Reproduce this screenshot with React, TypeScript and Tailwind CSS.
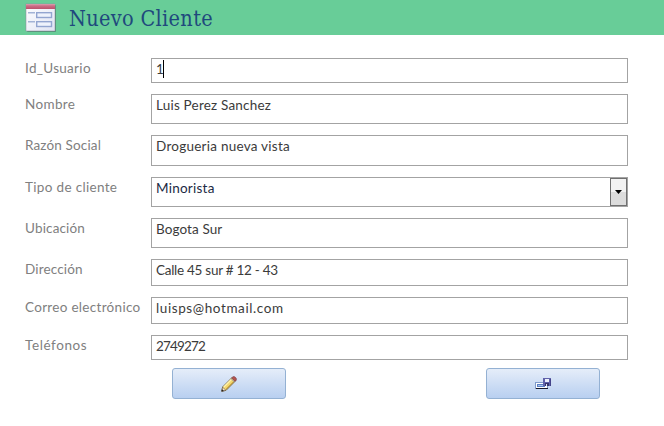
type Field = {
  label: string;
  value: string;
  height: string;
  labelTracking: string;
  valueTracking: string;
  kind?: "caret" | "select";
};

const fields: Field[] = [
  { label: "Id_Usuario", value: "1", height: "h-[25px]", labelTracking: "tracking-[0.3px]", valueTracking: "tracking-[-0.7px]", kind: "caret" },
  { label: "Nombre", value: "Luis Perez Sanchez", height: "h-[30px]", labelTracking: "tracking-[0.35px]", valueTracking: "tracking-[0.2px]" },
  { label: "Razón Social", value: "Drogueria nueva vista", height: "h-[31px]", labelTracking: "tracking-[0.15px]", valueTracking: "tracking-[0.25px]" },
  { label: "Tipo de cliente", value: "Minorista", height: "h-[30px]", labelTracking: "tracking-[0.33px]", valueTracking: "tracking-[0.25px]", kind: "select" },
  { label: "Ubicación", value: "Bogota Sur", height: "h-[30px]", labelTracking: "tracking-[0.15px]", valueTracking: "tracking-[0.1px]" },
  { label: "Dirección", value: "Calle 45 sur # 12 - 43", height: "h-[27px]", labelTracking: "tracking-[0.15px]", valueTracking: "tracking-[-0.27px]" },
  { label: "Correo electrónico", value: "luisps@hotmail.com", height: "h-[27px]", labelTracking: "tracking-[0.3px]", valueTracking: "tracking-[0.6px]" },
  { label: "Teléfonos", value: "2749272", height: "h-[25px]", labelTracking: "tracking-[0.6px]", valueTracking: "tracking-[-0.85px]" },
];

function FormIcon() {
  return (
    <svg width="32" height="30" viewBox="0 0 32 30">
      <defs>
        <linearGradient id="sheet" x1="0" y1="0" x2="1" y2="1">
          <stop offset="0" stopColor="#ffffff" />
          <stop offset="1" stopColor="#dfe3f3" />
        </linearGradient>
        <linearGradient id="bar" x1="0" y1="0" x2="0" y2="1">
          <stop offset="0" stopColor="#d9a0b0" />
          <stop offset=".4" stopColor="#cc6c86" />
          <stop offset="1" stopColor="#bb526c" />
        </linearGradient>
      </defs>
      <rect x="2" y="2" width="29" height="27" rx="1" fill="#42775f" opacity=".65" />
      <rect x="1" y="1" width="29" height="27" fill="url(#sheet)" stroke="#8f829a" strokeWidth=".5" />
      <rect x="1" y="1" width="29" height="5" fill="url(#bar)" />
      <path d="M3 9.7h7M3 18.7h7" stroke="#a3b3d6" strokeWidth="1.4" />
      <rect x="11.7" y="9.7" width="14.8" height="4.8" fill="#eef2fc" stroke="#93a5d0" strokeWidth="1.4" />
      <rect x="11.7" y="18.7" width="14.8" height="4.8" fill="#eef2fc" stroke="#93a5d0" strokeWidth="1.4" />
    </svg>
  );
}

function PencilIcon() {
  return (
    <svg width="16" height="16" viewBox="0 0 16 16">
      <path d="M.8 15.2 1.6 11 11 1.6 14.4 5 5 14.4Z" fill="#f2d66c" stroke="#6b5a38" strokeWidth=".9" />
      <path d="M2.6 11.2 10.8 3" stroke="#fff3ae" strokeWidth="1.4" />
      <path d="M4.8 13.4 13 5.2" stroke="#c59b3c" strokeWidth="1" />
      <path d="M.8 15.2 1.6 11.2 4.9 14.3Z" fill="#f7e6cd" stroke="#6b5a48" strokeWidth=".6" />
      <path d="M.4 15.6 1 13.2 3 15Z" fill="#26221f" />
      <path d="M10.6 2 12 .7Q13.2.1 14.6 1.5T15.2 4.2L14 5.4Z" fill="#b4544f" stroke="#743d48" strokeWidth=".6" />
      <path d="m10 2.6 3.4 3.4" stroke="#999aa2" strokeWidth="1" />
    </svg>
  );
}

function SaveRecordIcon() {
  return (
    <svg width="16" height="12" viewBox="0 0 16 12" shapeRendering="crispEdges">
      <rect x="0" y="4" width="13" height="7" fill="#7f9bcb" />
      <rect x="1" y="10" width="12" height="1" fill="#15182b" />
      <rect x="1" y="5" width="11" height="5" fill="#fff" />
      <rect x="2" y="6" width="8" height="3" fill="#5a7fc4" />
      <rect x="3" y="7" width="5" height="1" fill="#a9c4ed" />
      <rect x="8" y="0" width="8" height="8" fill="#6062aa" />
      <rect x="15" y="1" width="1" height="7" fill="#44448a" />
      <rect x="10" y="1" width="4" height="3" fill="#edf1fc" />
      <rect x="10" y="5" width="4" height="3" fill="#35366e" />
      <rect x="11" y="6" width="1" height="2" fill="#dfe3f4" />
    </svg>
  );
}

const buttonClass =
  "flex h-[31px] w-[114px] items-center justify-center rounded-[3px] border border-[#94b1d3] bg-linear-to-b from-[#e5edf9] to-[#b8cff0]";

export default function App() {
  return (
    <div className="h-[426px] w-[664px] overflow-hidden bg-white font-['Lato',sans-serif] text-[13.5px]">
      <header className="flex h-[35px] items-start bg-[#68cd98] pl-[25px]">
        <div className="pt-[3px]">
          <FormIcon />
        </div>
        <h1 className="ml-[12px] pt-[5px] font-['DejaVu_Serif_Condensed','DejaVu_Serif',serif] text-[21.5px] leading-[28px] tracking-[0.32px] whitespace-nowrap text-[#1f497d] [font-stretch:condensed]">
          Nuevo Cliente
        </h1>
      </header>

      <form className="flex flex-col gap-[11px] pt-[23px] pl-[25px]">
        {fields.map((f) => (
          <div key={f.label} className="flex items-start">
            <label className={`w-[126px] pt-px leading-[18px] whitespace-nowrap text-[#808080] ${f.labelTracking}`}>
              {f.label}
            </label>
            <div className={`flex w-[477px] justify-between border border-[#a3a3a3] bg-white pl-[4px] ${f.height}`}>
              <div className={`flex pt-px leading-[18px] whitespace-nowrap ${f.kind === "select" ? "text-[#1b2a44]" : "text-[#3b3b3b]"} ${f.valueTracking}`}>
                {f.value}
                {f.kind === "caret" && <span className="h-[18px] w-px bg-black" />}
              </div>
              {f.kind === "select" && (
                <button type="button" className="flex h-[28px] w-[17px] items-center justify-center border border-[#707070] bg-linear-to-b from-[#f2f2f2] from-50% to-[#dcdcdc] to-50%">
                  <svg width="7" height="4" viewBox="0 0 7 4">
                    <path d="M0 0h7L3.5 4Z" fill="#000" />
                  </svg>
                </button>
              )}
            </div>
          </div>
        ))}
      </form>

      <div className="flex gap-[200px] pt-[8px] pl-[172px]">
        <button type="button" className={buttonClass} aria-label="Editar">
          <PencilIcon />
        </button>
        <button type="button" className={buttonClass} aria-label="Guardar">
          <SaveRecordIcon />
        </button>
      </div>
    </div>
  );
}
